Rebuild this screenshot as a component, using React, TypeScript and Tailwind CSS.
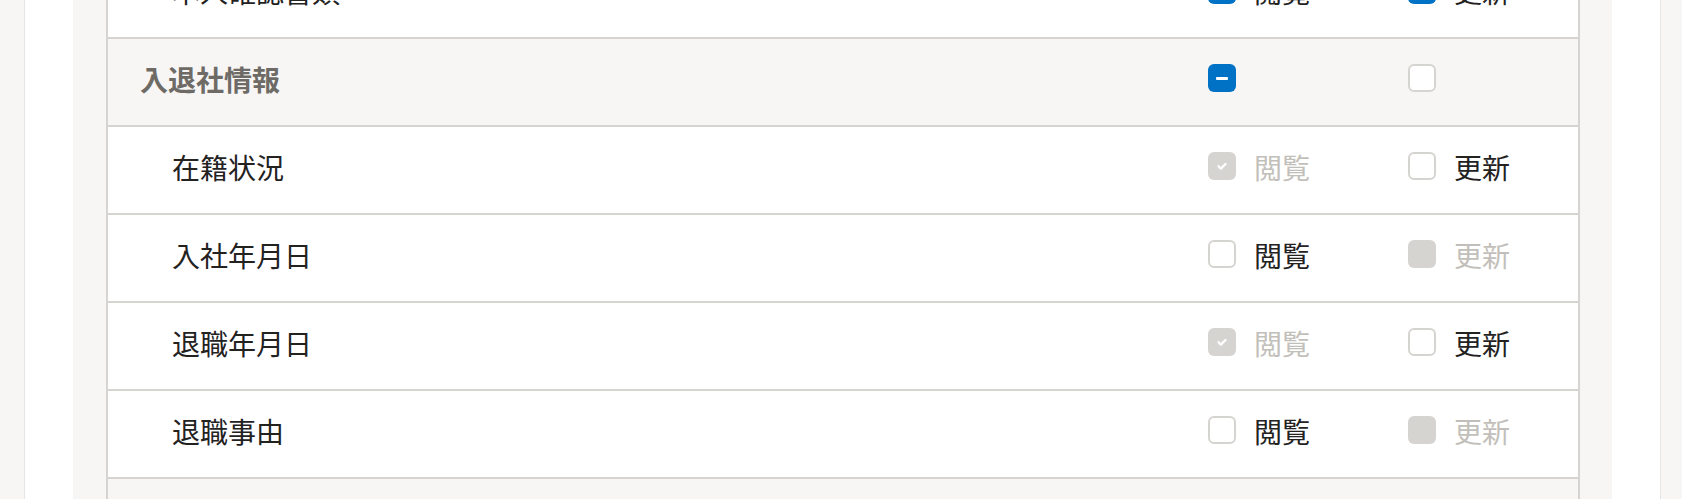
import React from "react";

type State = "on" | "off" | "mixed" | "disabledOn" | "disabledOff";

const rows: { kind: "group" | "item"; label: string; view: State; edit: State }[] = [
  { kind: "item", label: "本人確認書類", view: "on", edit: "on" },
  { kind: "group", label: "入退社情報", view: "mixed", edit: "off" },
  { kind: "item", label: "在籍状況", view: "disabledOn", edit: "off" },
  { kind: "item", label: "入社年月日", view: "off", edit: "disabledOff" },
  { kind: "item", label: "退職年月日", view: "disabledOn", edit: "off" },
  { kind: "item", label: "退職事由", view: "off", edit: "disabledOff" },
  { kind: "group", label: "給与情報", view: "off", edit: "off" },
];

function Box({ state }: { state: State }) {
  if (state === "on") {
    return (
      <span className="w-[28px] h-[28px] rounded-[6px] bg-[#0072c6] flex items-center justify-center mb-[8px] shrink-0">
        <svg width="14" height="14" viewBox="0 0 14 14" fill="none">
          <path d="M3 7.2l2.6 2.6L11 4.4" stroke="#fff" strokeWidth="2.2" strokeLinecap="round" strokeLinejoin="round" />
        </svg>
      </span>
    );
  }
  if (state === "mixed") {
    return (
      <span className="w-[28px] h-[28px] rounded-[6px] bg-[#0072c6] flex items-center justify-center mb-[8px] shrink-0">
        <span className="w-[12px] h-[3px] rounded-[1px] bg-white" />
      </span>
    );
  }
  if (state === "disabledOn") {
    return (
      <span className="w-[28px] h-[28px] rounded-[6px] bg-[#d6d4d0] flex items-center justify-center mb-[8px] shrink-0">
        <svg width="14" height="14" viewBox="0 0 14 14" fill="none">
          <path d="M3.5 7.2l2.4 2.4L10.5 5" stroke="#fff" strokeWidth="2.2" strokeLinecap="round" strokeLinejoin="round" />
        </svg>
      </span>
    );
  }
  if (state === "disabledOff") {
    return <span className="w-[28px] h-[28px] rounded-[6px] bg-[#d6d4d0] mb-[8px] shrink-0" />;
  }
  return <span className="w-[28px] h-[28px] rounded-[6px] bg-white border-2 border-[#d6d4d0] mb-[8px] shrink-0" />;
}

function Cell({ state, label, show, width }: { state: State; label: string; show: boolean; width: string }) {
  const disabled = state === "disabledOn" || state === "disabledOff";
  return (
    <div className={`${width} flex items-center gap-[18px] shrink-0`}>
      <Box state={state} />
      {show && (
        <span className={`text-[28px] leading-[42px] pb-[7px] ${disabled ? "text-[#c2bfba]" : "text-[#23221f]"}`}>{label}</span>
      )}
    </div>
  );
}

export default function App() {
  return (
    <div
      className="w-[1682px] h-[499px] overflow-hidden bg-[#f7f6f5] flex pl-[24px]"
      style={{ fontFamily: '"Noto Sans CJK JP", "Noto Sans", sans-serif' }}
    >
      <div className="w-[1637px] bg-white border-x border-[#e8e6e3] px-[48px] flex">
        <div className="flex-1 flex flex-col bg-[#f7f6f5] pl-[33px] pr-[32px]">
          <div className="border-x-2 border-[#d6d4d0] -mt-[49px]">
            {rows.map((r, i) => {
              const group = r.kind === "group";
              return (
                <div
                  key={i}
                  className={`h-[88px] flex items-center border-b-2 border-[#d6d4d0] ${group ? "bg-[#f7f6f5]" : "bg-white"}`}
                >
                  <div className={`flex-1 pb-[7px] ${group ? "pl-[32px] font-bold text-[#6e6b66]" : "pl-[64px] text-[#23221f]"} text-[28px] leading-[42px]`}>
                    {r.label}
                  </div>
                  <Cell state={r.view} label="閲覧" show={!group} width="w-[200px]" />
                  <Cell state={r.edit} label="更新" show={!group} width="w-[170px]" />
                </div>
              );
            })}
          </div>
        </div>
      </div>
    </div>
  );
}
